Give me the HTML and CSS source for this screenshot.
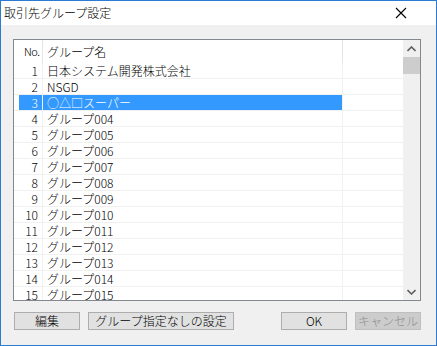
FILE: index.html
```html
<!DOCTYPE html>
<html lang="ja">
<head>
<meta charset="utf-8">
<link rel="stylesheet" href="styles.css">
</head>
<body>
<div class="window">
  <div class="titlebar">
    <span class="title">取引先グループ設定</span>
    <svg class="close" width="12" height="12" viewBox="0 0 12 12"><path d="M1 1 L11 11 M11 1 L1 11" stroke="#000" stroke-width="1.1" fill="none"/></svg>
  </div>
  <div class="client">
    <div class="listbox">
      <div class="listmain">
        <div class="header">
          <div class="hcell c1">No.</div>
          <div class="hcell c2">グループ名</div>
          <div class="hcell c3"></div>
        </div>
        <div class="rows">
          <div class="row"><div class="cell c1">1</div><div class="cell c2">日本システム開発株式会社</div><div class="cell c3"></div></div>
          <div class="row"><div class="cell c1">2</div><div class="cell c2">NSGD</div><div class="cell c3"></div></div>
          <div class="row sel"><div class="cell c1">3</div><div class="cell c2">○△□スーパー</div><div class="cell c3"></div></div>
          <div class="row"><div class="cell c1">4</div><div class="cell c2">グループ004</div><div class="cell c3"></div></div>
          <div class="row"><div class="cell c1">5</div><div class="cell c2">グループ005</div><div class="cell c3"></div></div>
          <div class="row"><div class="cell c1">6</div><div class="cell c2">グループ006</div><div class="cell c3"></div></div>
          <div class="row"><div class="cell c1">7</div><div class="cell c2">グループ007</div><div class="cell c3"></div></div>
          <div class="row"><div class="cell c1">8</div><div class="cell c2">グループ008</div><div class="cell c3"></div></div>
          <div class="row"><div class="cell c1">9</div><div class="cell c2">グループ009</div><div class="cell c3"></div></div>
          <div class="row"><div class="cell c1">10</div><div class="cell c2">グループ010</div><div class="cell c3"></div></div>
          <div class="row"><div class="cell c1">11</div><div class="cell c2">グループ011</div><div class="cell c3"></div></div>
          <div class="row"><div class="cell c1">12</div><div class="cell c2">グループ012</div><div class="cell c3"></div></div>
          <div class="row"><div class="cell c1">13</div><div class="cell c2">グループ013</div><div class="cell c3"></div></div>
          <div class="row"><div class="cell c1">14</div><div class="cell c2">グループ014</div><div class="cell c3"></div></div>
          <div class="row"><div class="cell c1">15</div><div class="cell c2">グループ015</div><div class="cell c3"></div></div>
        </div>
      </div>
      <div class="scrollbar">
        <div class="arrow"><svg width="9" height="6" viewBox="0 0 9 6"><path d="M0.5 5 L4.5 1 L8.5 5" stroke="#606060" stroke-width="1.6" fill="none"/></svg></div>
        <div class="thumb"></div>
        <div class="track"></div>
        <div class="arrow"><svg width="9" height="6" viewBox="0 0 9 6"><path d="M0.5 1 L4.5 5 L8.5 1" stroke="#606060" stroke-width="1.6" fill="none"/></svg></div>
      </div>
    </div>
    <div class="buttons">
      <div class="btn w66">編集</div>
      <div class="btn w146">グループ指定なしの設定</div>
      <div class="spacer"></div>
      <div class="btn w66">OK</div>
      <div class="btn w66 disabled">キャンセル</div>
    </div>
  </div>
</div>
</body>
</html>
```
FILE: styles.css
```css
html, body {
  margin: 0;
  padding: 0;
}
body {
  font-family: "Noto Sans CJK JP", "Noto Sans", sans-serif;
  font-size: 12px;
  font-weight: 300;
  color: #000;
}
.window {
  width: 437px;
  height: 346px;
  box-sizing: border-box;
  border: 1px solid #2b7bd3;
  display: flex;
  flex-direction: column;
  background: #f0f0f0;
}
.titlebar {
  height: 24px;
  background: #fff;
  display: flex;
  align-items: center;
  padding-left: 3px;
  padding-right: 29px;
  flex-shrink: 0;
}
.title {
  flex: 1;
  font-size: 12px;
  line-height: 14px;
}
.close {
  display: block;
}
.client {
  flex: 1;
  display: flex;
  flex-direction: column;
  padding: 14px 15px 0 12px;
}
.listbox {
  height: 262px;
  box-sizing: border-box;
  border: 1px solid #828790;
  background: #fff;
  display: flex;
  overflow: hidden;
}
.listmain {
  flex: 1;
  display: flex;
  flex-direction: column;
  overflow: hidden;
}
.header {
  height: 23px;
  display: flex;
  flex-shrink: 0;
}
.hcell {
  box-sizing: border-box;
  line-height: 23px;
  border-right: 1px solid #e5e5e5;
}
.c1 {
  width: 29px;
  flex-shrink: 0;
  box-sizing: border-box;
}
.c2 {
  width: 300px;
  flex-shrink: 0;
  box-sizing: border-box;
  padding-left: 4px;
}
.c3 {
  flex: 1;
}
.hcell.c1 {
  padding-left: 10px;
  font-size: 11px;
  letter-spacing: -0.5px;
}
.hcell.c3 {
  border-right: none;
}
.rows {
  flex: 1;
  overflow: hidden;
}
.row {
  height: 16px;
  box-sizing: border-box;
  border-bottom: 1px solid #f0f0f0;
  display: flex;
}
.cell {
  line-height: 15px;
  white-space: nowrap;
  overflow: hidden;
}
.cell.c1 {
  text-align: right;
  padding-right: 4px;
  margin-left: 5px;
  width: 24px;
  border-right: 1px solid #f0f0f0;
}
.cell.c2 {
  border-right: 1px solid #f0f0f0;
}
.row.sel .c1,
.row.sel .c2 {
  background: #3399ff;
  color: #fff;
}
.scrollbar {
  width: 17px;
  flex-shrink: 0;
  background: #f0f0f0;
  display: flex;
  flex-direction: column;
}
.arrow {
  height: 17px;
  display: flex;
  align-items: center;
  justify-content: center;
}
.thumb {
  height: 17px;
  background: #cdcdcd;
}
.track {
  flex: 1;
}
.buttons {
  display: flex;
  gap: 8px;
  margin-top: 11px;
  padding-left: 1px;
}
.btn {
  height: 18px;
  box-sizing: border-box;
  border: 1px solid #adadad;
  background: #e1e1e1;
  display: flex;
  align-items: center;
  justify-content: center;
  font-size: 12px;
  line-height: 16px;
}
.w66 {
  width: 66px;
}
.w146 {
  width: 146px;
}
.spacer {
  flex: 1;
}
.btn.disabled {
  background: #cccccc;
  border-color: #bfbfbf;
  color: #8c8c8c;
}
```
